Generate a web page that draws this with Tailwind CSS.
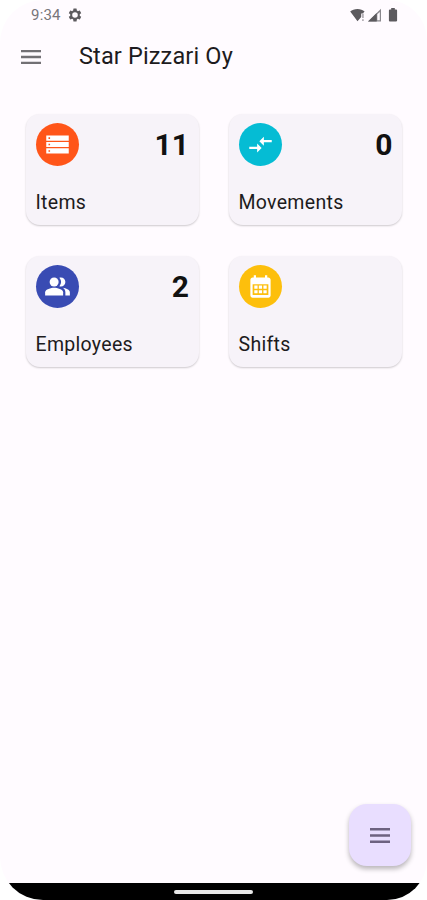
<!DOCTYPE html>
<html lang="en">
<head>
  <meta charset="utf-8">
  <meta name="viewport" content="width=device-width, initial-scale=1">
  <title>Star Pizzari Oy</title>
  <script src="https://cdn.jsdelivr.net/npm/@tailwindcss/browser@4"></script>
</head>
<body class="bg-white font-['Roboto',sans-serif] text-[#1d1b20]">
  <div class="flex flex-col w-[427px] h-[900px] rounded-l-[43px] rounded-r-[40px] overflow-hidden bg-[#fffbff]">

    <!-- Status bar -->
    <div class="flex items-center h-[29px] pl-[31px] pr-[28px] text-[#5c5a5e]">
      <span class="text-[15px] leading-[29px] pt-[2px] tracking-[0.2px] text-[#77757a]">9:34</span>
      <svg class="ml-[6px] size-[16px]" viewBox="0 0 24 24" fill="currentColor"><path fill-rule="evenodd" d="M19.14 12.94c.04-.3.06-.61.06-.94s-.02-.64-.07-.94l2.03-1.58a.49.49 0 0 0 .12-.61l-1.92-3.32a.49.49 0 0 0-.59-.22l-2.39.96a7 7 0 0 0-1.62-.94l-.36-2.54a.48.48 0 0 0-.48-.41h-3.84a.48.48 0 0 0-.47.41l-.36 2.54c-.59.24-1.13.57-1.62.94l-2.39-.96a.48.48 0 0 0-.59.22L2.74 8.87a.48.48 0 0 0 .12.61l2.03 1.58c-.05.3-.09.63-.09.94s.02.64.07.94l-2.03 1.58a.49.49 0 0 0-.12.61l1.92 3.32c.12.22.37.29.59.22l2.39-.96c.5.38 1.03.7 1.62.94l.36 2.54c.05.24.24.41.48.41h3.84c.24 0 .44-.17.47-.41l.36-2.54a7 7 0 0 0 1.62-.94l2.39.96c.22.08.47 0 .59-.22l1.92-3.32a.48.48 0 0 0-.12-.61zM12 16.2a4.2 4.2 0 1 1 0-8.4 4.2 4.2 0 0 1 0 8.4z"/></svg>
      <div class="ml-auto flex items-center">
        <svg class="w-[16px] h-[14px]" viewBox="0 0 16 14"><path fill="currentColor" d="M.2 3.4C2 1.9 4.500 1 7.500 1s5.300.9 7.100 2.400L12.800 5.600H11.200V9L7.500 13.200z"/><path fill="#b5b2b7" d="M12 5.600h1.800v4.400H12zM12 11.300h1.800v1.700H12z"/></svg>
        <svg class="ml-[2px] w-[13px] h-[14px]" viewBox="0 0 13 14"><path fill="#8a888d" d="M0 13.500 13 .8v12.700z"/><path fill="currentColor" d="M0 13.500 8.700 5v8.500z"/><path fill="#fffbff" d="M9.300 6.300 11.800 4v8.300H9.300z"/></svg>
        <svg class="ml-[7px] mr-[1px] w-[10px] h-[14px]" viewBox="0 0 10 14" fill="currentColor"><path d="M3.200 0h3.600v1.500h1.400c.5 0 .9.400.9.900v10.200c0 .5-.4.900-.9.900H1.800c-.5 0-.9-.4-.9-.9V2.400c0-.5.4-.9.900-.9h1.400z"/></svg>
      </div>
    </div>

    <!-- App bar -->
    <div class="flex items-center h-[55px] pl-[21px]">
      <svg class="w-[20px] h-[14px]" viewBox="0 0 20 14" fill="#727074"><path d="M0 0h20v2.300H0zM0 5.850h20v2.300H0zM0 11.700h20V14H0z"/></svg>
      <h1 class="ml-[38px] text-[23.500px] leading-[52px] pb-[2px] tracking-[0.15px]">Star Pizzari Oy</h1>
    </div>

    <!-- Dashboard cards -->
    <main class="grid grid-cols-2 gap-x-[30px] gap-y-[31px] pt-[30px] pl-[26px] pr-[25px]">
      <div class="flex flex-col justify-between h-[111px] rounded-[14px] bg-[#f7f3f9] pt-[8.500px] pl-[9.500px] pr-[10px] pb-[8px] shadow-[0_1px_2px_rgba(0,0,0,0.2)]">
        <div class="flex items-center justify-between">
          <div class="flex items-center justify-center size-[43px] rounded-full bg-[#ff5519]">
            <svg class="size-[27px]" viewBox="0 0 24 24" fill="#fff"><path d="M2 20h20v-4.600H2V20zm2-3h1.400v1.400H4V17zM2 4v4.600h20V4H2zm3.400 3H4V5.600h1.400V7zM2 14.300h20V9.700H2v4.600zm2-3h1.400v1.400H4v-1.400z"/></svg>
          </div>
          <span class="text-[30px] leading-[43px] font-bold text-[#111]">11</span>
        </div>
        <span class="text-[19.500px] leading-[28px] tracking-[0.3px]">Items</span>
      </div>

      <div class="flex flex-col justify-between h-[111px] rounded-[14px] bg-[#f7f3f9] pt-[8.500px] px-[9.500px] pb-[8px] shadow-[0_1px_2px_rgba(0,0,0,0.2)]">
        <div class="flex items-center justify-between">
          <div class="flex items-center justify-center size-[43px] rounded-full bg-[#05bcd4]">
            <svg class="size-[27px]" viewBox="0 0 24 24" fill="#fff"><path d="M9.010 14H2v2h7.010v3L13 15l-3.990-4v3zm5.980-1v-3H22V8h-7.010V5L11 9l3.990 4z"/></svg>
          </div>
          <span class="text-[30px] leading-[43px] font-bold text-[#111]">0</span>
        </div>
        <span class="text-[19.500px] leading-[28px] tracking-[0.3px]">Movements</span>
      </div>

      <div class="flex flex-col justify-between h-[111px] rounded-[14px] bg-[#f7f3f9] pt-[8.500px] pl-[9.500px] pr-[10px] pb-[8px] shadow-[0_1px_2px_rgba(0,0,0,0.2)]">
        <div class="flex items-center justify-between">
          <div class="flex items-center justify-center size-[43px] rounded-full bg-[#394bb3]">
            <svg class="size-[27px]" viewBox="0 0 24 24" fill="#fff"><path d="M16.670 13.130C18.040 14.060 19 15.320 19 17v3h4v-3c0-2.180-3.570-3.470-6.330-3.870zM15 12c2.210 0 4-1.790 4-4s-1.790-4-4-4c-.47 0-.91.1-1.330.24a5.980 5.980 0 0 1 0 7.520c.42.14.86.24 1.330.24z"/><circle cx="9" cy="8" r="4"/><path d="M9 13c-2.670 0-8 1.340-8 4v3h16v-3c0-2.660-5.330-4-8-4z"/></svg>
          </div>
          <span class="text-[30px] leading-[43px] font-bold text-[#111]">2</span>
        </div>
        <span class="text-[19.500px] leading-[28px] tracking-[0.3px]">Employees</span>
      </div>

      <div class="flex flex-col justify-between h-[111px] rounded-[14px] bg-[#f7f3f9] pt-[8.500px] px-[9.500px] pb-[8px] shadow-[0_1px_2px_rgba(0,0,0,0.2)]">
        <div class="flex items-center justify-between">
          <div class="flex items-center justify-center size-[43px] rounded-full bg-[#fdbf0c]">
            <svg class="size-[27px]" viewBox="0 0 24 24"><path fill="#fff" fill-rule="evenodd" d="M19 4h-1V2h-2v2H8V2H6v2H5c-1.110 0-2 .9-2 2v14c0 1.100.89 2 2 2h14c1.100 0 2-.9 2-2V6c0-1.100-.9-2-2-2zm0 15.500H5V10h14z"/><path fill="#fff" d="M6.500 11.200h2.900v2.700H6.500zM10.500 11.200h2.900v2.700h-2.900zM14.600 11.200h2.900v2.700h-2.900zM6.500 15.300h2.900V18H6.500zM10.500 15.300h2.900V18h-2.900zM14.600 15.300h2.900V18h-2.900z"/></svg>
          </div>
        </div>
        <span class="text-[19.500px] leading-[28px] tracking-[0.3px]">Shifts</span>
      </div>
    </main>

    <!-- Floating action button -->
    <div class="mt-auto flex justify-end pr-[16px] pb-[17px]">
      <button class="flex items-center justify-center size-[62px] rounded-[18px] bg-[#e9deff] shadow-[0_3px_5px_rgba(0,0,0,0.28)]">
        <svg class="w-[20px] h-[15px]" viewBox="0 0 20 15" fill="#6d6280"><path d="M0 0h20v2.500H0zM0 6.200h20v2.500H0zM0 12.400h20v2.500H0z"/></svg>
      </button>
    </div>

    <!-- Navigation bar -->
    <div class="flex justify-center h-[17px] shrink-0 bg-black pt-[7px]">
      <div class="w-[79px] h-[4px] rounded-full bg-[#e8e8e8]"></div>
    </div>
  </div>
</body>
</html>
